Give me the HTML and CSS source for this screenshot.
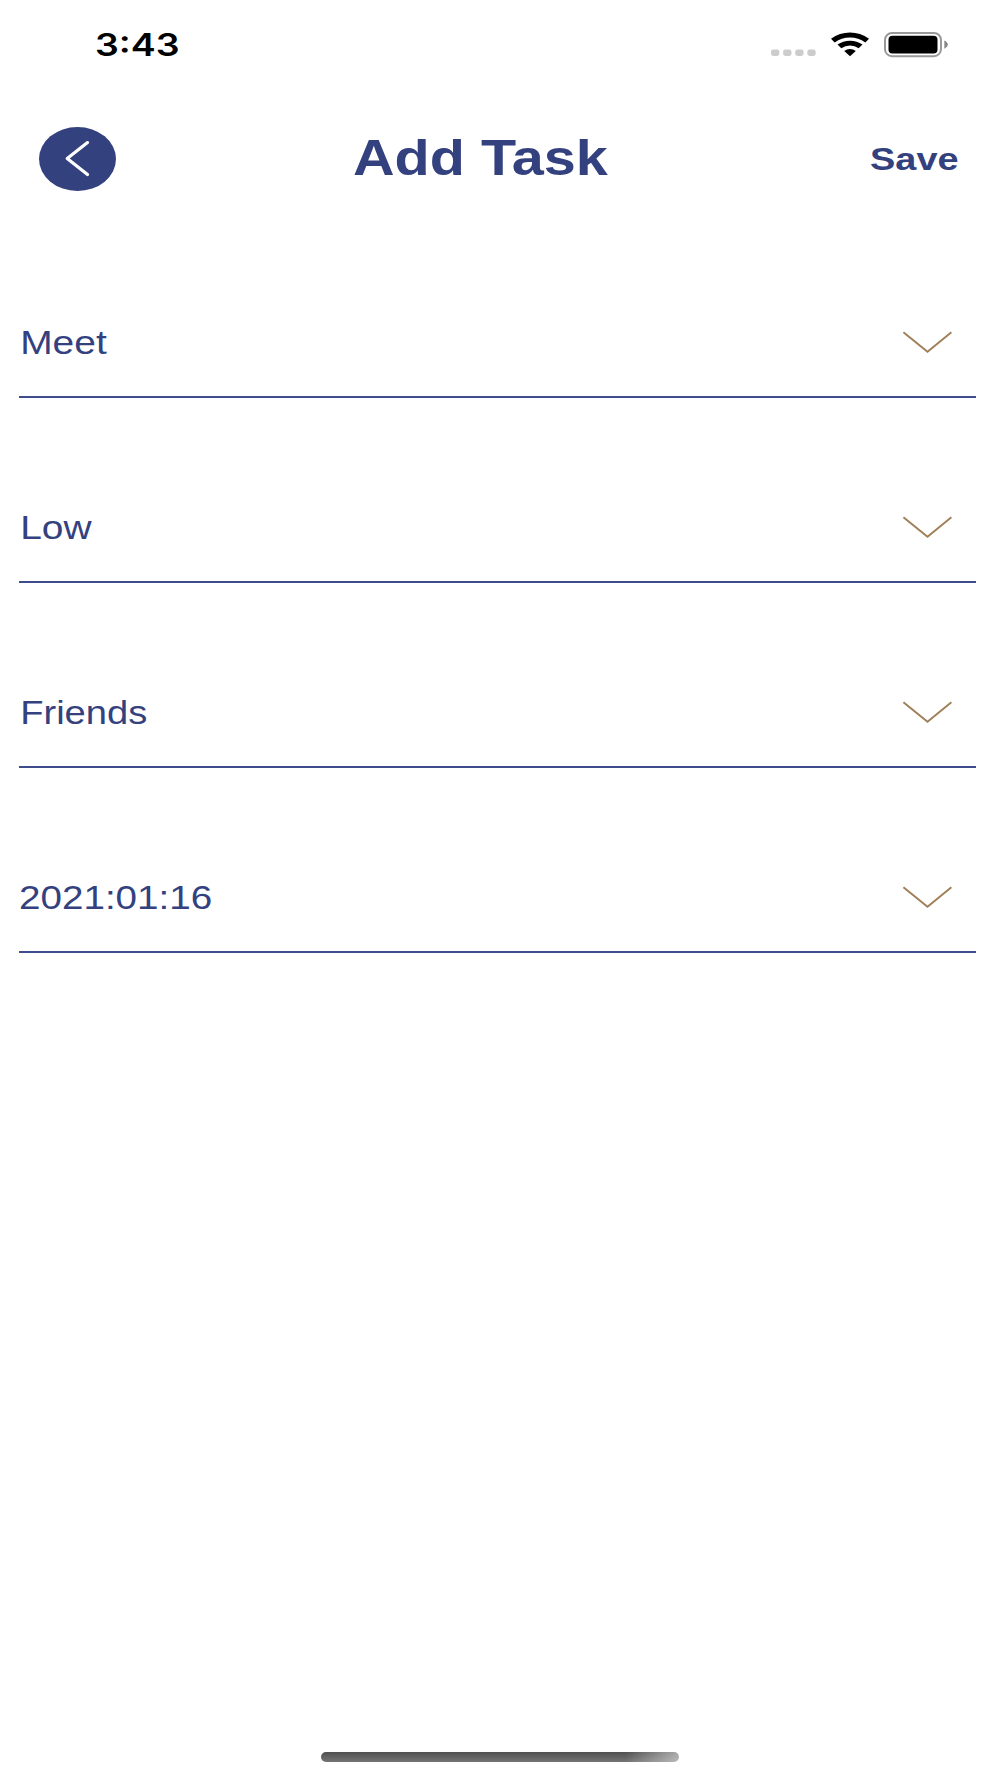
FILE: index.html
```html
<!DOCTYPE html>
<html lang="en">
<head>
    <meta charset="UTF-8">
    <meta name="viewport" content="width=device-width, initial-scale=1.0">
    <title>Add Task</title>
    <link rel="stylesheet" href="styles.css">
</head>
<body>
    <div class="screen">
        <div class="status-bar">
            <span class="time">3:43</span>
            <div class="status-icons">
                <svg class="signal" width="45" height="26" viewBox="0 0 45 26">
                    <rect x="0" y="17.6" width="8.4" height="6.4" rx="2.4"/>
                    <rect x="12.1" y="17.6" width="8.4" height="6.4" rx="2.4"/>
                    <rect x="24.2" y="17.6" width="8.4" height="6.4" rx="2.4"/>
                    <rect x="36.3" y="17.6" width="8.4" height="6.4" rx="2.4"/>
                </svg>
                <svg class="wifi" width="38" height="26" viewBox="0 0 38 26">
                    <path d="M0 6.8Q8.5 0.6 19 0.6T38 6.8L34.3 10.4Q27.5 5.6 19 5.6T3.7 10.4Z"/>
                    <path d="M6.5 12.6Q12 8.7 19 8.7T31.5 12.6L27.7 16.2Q23.8 13.6 19 13.6T10.3 16.2Z"/>
                    <path d="M13.2 18.9Q15.8 17 19 17T24.8 18.9L19 24.3Z"/>
                </svg>
                <svg class="battery" width="64" height="26" viewBox="0 0 64 26">
                    <rect class="battery-case" x="1" y="1" width="56" height="23.2" rx="7"/>
                    <rect x="4.5" y="3.8" width="49" height="17.6" rx="4"/>
                    <path class="battery-tip" d="M60.3 8.4Q63.8 10 63.8 12.6T60.3 16.8Z"/>
                </svg>
            </div>
        </div>

        <div class="header">
            <button class="back" type="button" aria-label="Back">
                <svg width="77" height="64" viewBox="0 0 77 64">
                    <path d="M48.5 15.6L28.2 31.6L48.5 47.6"/>
                </svg>
            </button>
            <h1 class="title">Add Task</h1>
            <span class="save">Save</span>
        </div>

        <div class="form">
            <div class="field">
                <span class="value">Meet</span>
                <svg class="arrow" width="50" height="24" viewBox="0 0 50 24"><path d="M1.4 2.3L25.5 21.8L49.4 2.3"/></svg>
            </div>
            <div class="field">
                <span class="value">Low</span>
                <svg class="arrow" width="50" height="24" viewBox="0 0 50 24"><path d="M1.4 2.3L25.5 21.8L49.4 2.3"/></svg>
            </div>
            <div class="field">
                <span class="value group">Friends</span>
                <svg class="arrow" width="50" height="24" viewBox="0 0 50 24"><path d="M1.4 2.3L25.5 21.8L49.4 2.3"/></svg>
            </div>
            <div class="field">
                <span class="value date">2021:01:16</span>
                <svg class="arrow" width="50" height="24" viewBox="0 0 50 24"><path d="M1.4 2.3L25.5 21.8L49.4 2.3"/></svg>
            </div>
        </div>

        <div class="home-indicator"></div>
    </div>
</body>
</html>
```
FILE: styles.css
```css
* {
    box-sizing: border-box;
}
body {
    margin: 0;
    background-color: #fff;
    color: #34417f;
    font-family: "Liberation Sans", Arial, sans-serif;
}
.screen {
    display: flex;
    flex-direction: column;
    height: 1778px;
    overflow: hidden;
}

/* Status bar */
.status-bar {
    display: flex;
    justify-content: space-between;
    align-items: center;
    height: 90px;
    padding: 0 52px 0 95px;
    color: #000;
}
.time {
    font-family: Inter, sans-serif;
    font-size: 31px;
    font-weight: 600;
    line-height: 40px;
    transform: scaleX(1.21);
    transform-origin: left;
}
.status-icons {
    display: flex;
}
.signal {
    fill: #ccc;
    margin-right: 15px;
}
.wifi {
    margin-right: 15px;
}
.battery-case {
    fill: none;
    stroke: #999;
    stroke-width: 2;
}
.battery-tip {
    fill: #888;
}

/* Header */
.header {
    display: flex;
    align-items: center;
    height: 123px;
    padding: 15px 55px 0 39px;
}
.back {
    width: 77px;
    height: 64px;
    padding: 0;
    border: none;
    border-radius: 50%;
    background-color: #34417f;
}
.back svg {
    display: block;
    fill: none;
    stroke: #fff;
    stroke-width: 3.2;
    stroke-linecap: round;
    stroke-linejoin: round;
}
.title {
    margin: 0 auto 2px 237px;
    font-size: 49.5px;
    line-height: 60px;
    transform: scaleX(1.163);
    transform-origin: left;
}
.save {
    font-size: 32px;
    font-weight: bold;
    transform: scaleX(1.185);
    transform-origin: left;
}

/* Form */
.form {
    padding: 0 24px 0 19px;
}
.field {
    display: flex;
    justify-content: space-between;
    align-items: flex-end;
    height: 185px;
    padding: 0 24px 33px 0;
    border-bottom: 2px solid #3e4b8c;
}
.value {
    padding-left: 1px;
    font-size: 33px;
    line-height: 40px;
    transform: scaleX(1.18);
    transform-origin: left;
}
.group {
    transform: scaleX(1.155);
}
.date {
    padding-left: 0;
    transform: scaleX(1.17);
}
.arrow {
    margin-bottom: 9px;
    fill: none;
    stroke: #a08058;
    stroke-width: 2;
}

.home-indicator {
    width: 358px;
    height: 10px;
    margin: auto auto 16px;
    border-radius: 5px;
    background: linear-gradient(to right, rgba(255, 255, 255, 0) 85%, rgba(255, 255, 255, 0.5)), linear-gradient(#505050, #757575);
}
```
